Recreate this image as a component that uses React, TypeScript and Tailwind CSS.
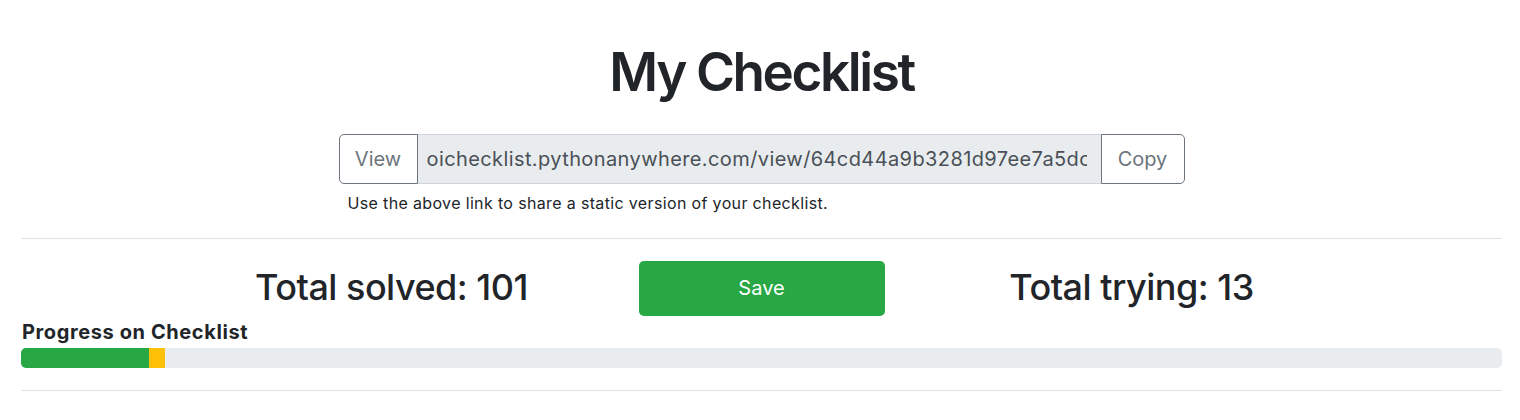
export default function App() {
  const solved = 101;
  const trying = 13;
  const total = 1170;
  const shareUrl = "oichecklist.pythonanywhere.com/view/64cd44a9b3281d97ee7a5dcf";

  return (
    <div className="min-h-[420px] bg-white pl-[21px] pr-[18px] text-[#212529] [font-family:Inter,'Liberation_Sans',sans-serif]">
      {/* Title */}
      <h1 className="pt-[42px] text-center text-[53px] font-semibold leading-[60px] tracking-[-2.4px]">My Checklist</h1>

      {/* Share link */}
      <div className="mx-auto mt-[32px] w-[846px]">
        <div className="flex h-[50px] text-[20px]">
          <button className="w-[79px] shrink-0 rounded-l-[5px] border border-[#6c757d] text-[#6c757d]">View</button>
          <div className="flex min-w-0 flex-1 items-center border-y border-[#ced4da] bg-[#e9ecef] pl-[9px] pr-[14px] text-[#495057]">
            <div className="overflow-hidden whitespace-nowrap tracking-[0.4px]">{shareUrl}</div>
          </div>
          <button className="w-[84px] shrink-0 rounded-r-[5px] border border-[#6c757d] text-[#6c757d]">Copy</button>
        </div>
        <p className="mt-[9px] pl-[9px] text-[16px] leading-[20px] tracking-[0.35px]">Use the above link to share a static version of your checklist.</p>
      </div>

      <hr className="mt-[25px] border-[#e3e3e3]" />

      {/* Totals */}
      <div className="mt-[21px] flex h-[56px] items-center justify-center">
        <div className="-mt-[3px] w-[494px] text-center text-[36px] font-medium leading-[40px] tracking-[-0.5px]">Total solved: {solved}</div>
        <button className="h-[55px] w-[246px] shrink-0 rounded-[5px] bg-[#28a745] text-[20px] text-white">Save</button>
        <div className="-mt-[3px] w-[494px] text-center text-[36px] font-medium leading-[40px] tracking-[-0.5px]">Total trying: {trying}</div>
      </div>

      {/* Progress */}
      <div className="mt-[4px] pl-px text-[20px] font-bold leading-[24px] tracking-[0.6px]">Progress on Checklist</div>
      <div className="mt-[4px] flex h-[20px] overflow-hidden rounded-[5px] bg-[#e9ecef]">
        <div className="bg-[#28a745]" style={{ width: `${(solved / total) * 100}%` }} />
        <div className="bg-[#ffc107]" style={{ width: `${(trying / total) * 100}%` }} />
      </div>

      <hr className="mt-[22px] border-[#e3e3e3]" />
    </div>
  );
}
